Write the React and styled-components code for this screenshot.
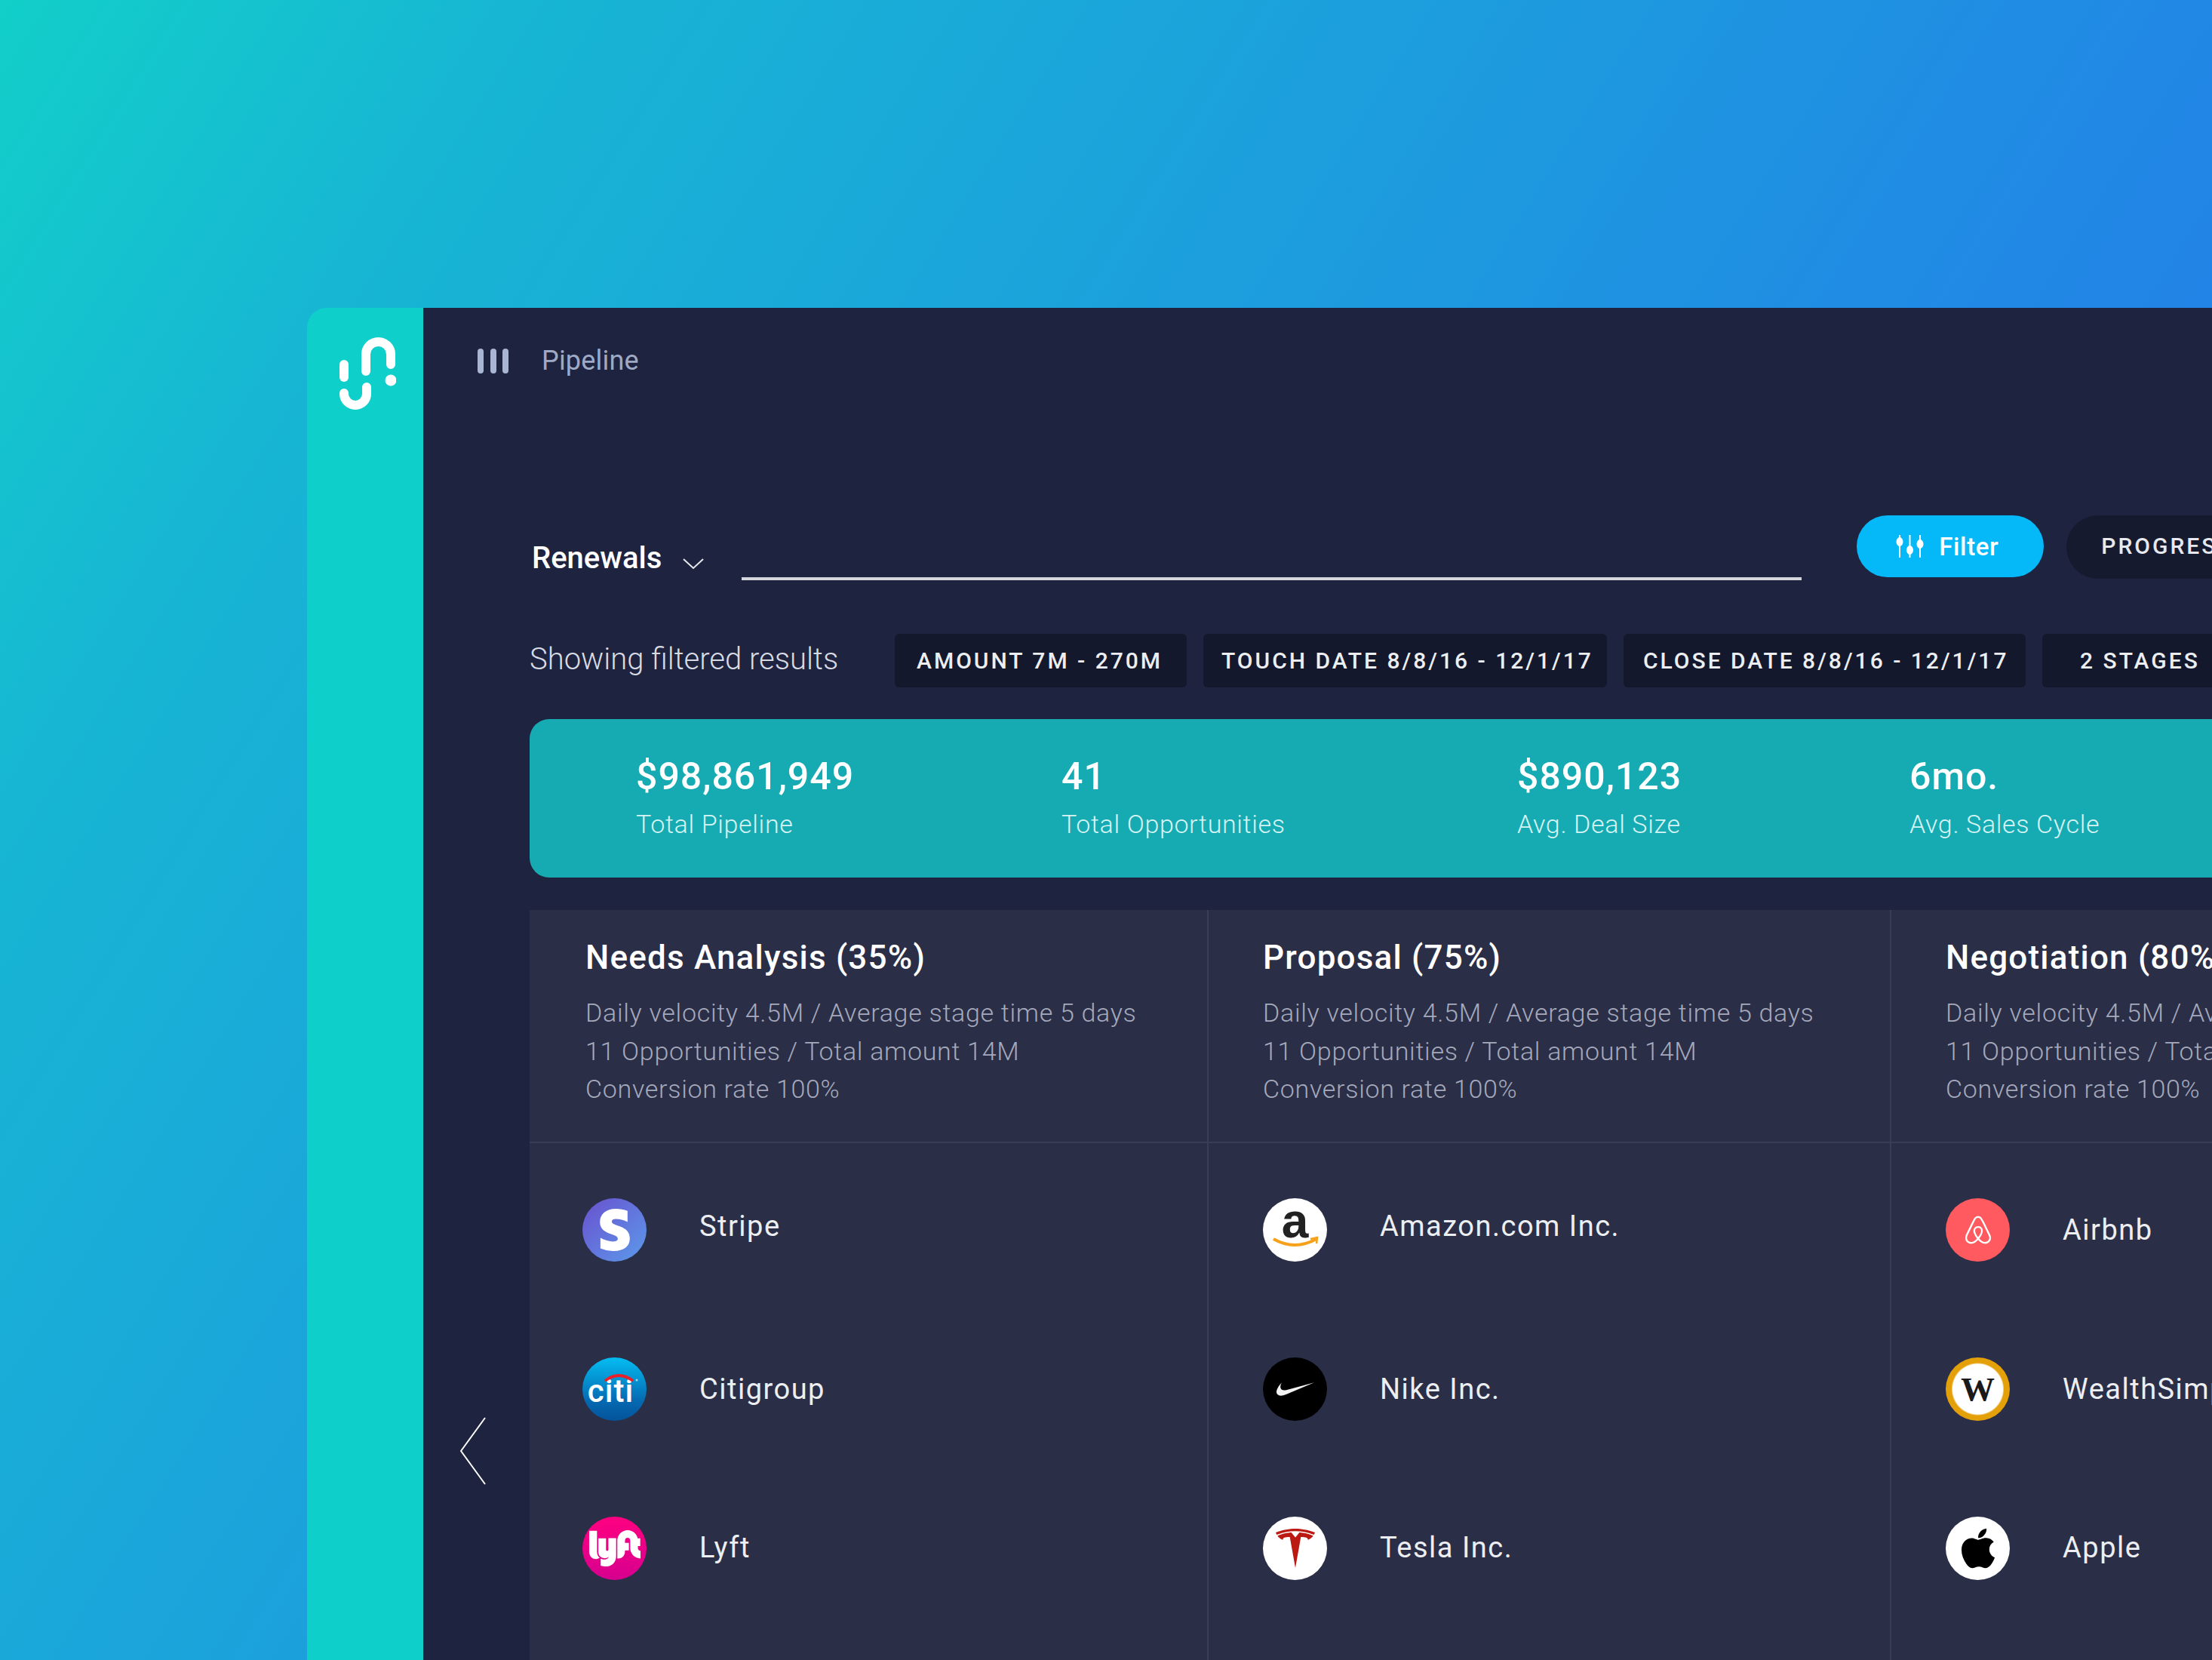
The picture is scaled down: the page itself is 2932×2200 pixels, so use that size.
import React from "react";
import styled, { createGlobalStyle } from "styled-components";
import { FaStripeS, FaLyft, FaAirbnb, FaApple } from "react-icons/fa";
import { SiNike, SiTesla } from "react-icons/si";

const GlobalStyle = createGlobalStyle`
  html, body {
    margin: 0;
    height: 2200px;
    overflow: hidden;
  }
  body {
    font-family: Roboto, "Liberation Sans", sans-serif;
  }
`;

const Page = styled.div`
  width: 2932px;
  height: 2200px;
  box-sizing: border-box;
  padding: 408px 0 0 407px;
  overflow: hidden;
  background: linear-gradient(122deg, #12cfc9 0%, #17b6d3 16%, #1aa8d9 32%, #2188e5 68%, #2570ea 100%);
`;
const Win = styled.div`
  display: flex;
  width: 2525px;
  height: 1792px;
  overflow: hidden;
  border-top-left-radius: 26px;
`;
const Sidebar = styled.aside`
  width: 154px;
  flex-shrink: 0;
  padding: 39px 0 0 42px;
  box-sizing: border-box;
  background: #0fcfcb;
`;
const Main = styled.main`
  flex: 1;
  min-width: 0;
  background: #1e2340;
  overflow: hidden;
`;
const TopBar = styled.header`
  display: flex;
  align-items: center;
  height: 33px;
  padding: 54px 0 188px 72px;
`;
const Grip = styled.div`
  display: flex;
  gap: 8.5px;
  margin-right: 44px;
`;
const GripBar = styled.span`
  width: 8px;
  height: 33px;
  border-radius: 4px;
  background: #a9b6d3;
`;
const PageName = styled.span`
  font-size: 36px;
  font-weight: 400;
  letter-spacing: 0.2px;
  color: #9ea9c6;
  line-height: 33px;
`;
const Toolbar = styled.div`
  display: flex;
  align-items: flex-start;
  height: 84px;
  margin-left: 144px;
`;
const ViewName = styled.h2`
  margin: 35px 0 0;
  font-size: 40px;
  font-weight: 500;
  line-height: 44px;
  color: #fff;
`;
const Caret = styled.svg`
  width: 28px;
  height: 15px;
  margin: 57px 50px 0 28px;
  flex-shrink: 0;
`;
const Rule = styled.div`
  width: 1405px;
  height: 4px;
  margin: 82px 73px 0 0;
  flex-shrink: 0;
  background: #d4d6dc;
`;
const FilterButton = styled.button`
  display: flex;
  align-items: center;
  gap: 20px;
  width: 248px;
  height: 82px;
  padding: 0 0 0 52px;
  flex-shrink: 0;
  border: 0;
  border-radius: 41px;
  background: #05b9f9;
  color: #fff;
  font-family: inherit;
  font-size: 33px;
  font-weight: 500;
  letter-spacing: 0.6px;
`;
const ProgressButton = styled.button`
  height: 84px;
  width: 320px;
  padding: 0 0 4px 46px;
  margin-left: 30px;
  flex-shrink: 0;
  text-align: left;
  border: 0;
  border-radius: 42px 0 0 42px;
  background: #161a2e;
  color: #e8e9ee;
  font-family: inherit;
  font-size: 30px;
  font-weight: 500;
  letter-spacing: 3px;
  white-space: nowrap;
`;
const FilterRow = styled.div`
  display: flex;
  align-items: center;
  gap: 22px;
  height: 71px;
  margin: 73px 0 42px 141px;
`;
const FilterNote = styled.span`
  width: 462px;
  flex-shrink: 0;
  margin-bottom: 4px;
  font-size: 40px;
  font-weight: 300;
  color: #d8dbe4;
`;
const Chip = styled.span`
  display: block;
  width: ${(p) => p.$width}px;
  padding-left: ${(p) => p.$pad}px;
  box-sizing: border-box;
  flex-shrink: 0;
  line-height: 71px;
  border-radius: 6px;
  background: #14182c;
  color: #eceef2;
  font-size: 30px;
  font-weight: 500;
  letter-spacing: 3px;
  white-space: nowrap;
`;
const StatBar = styled.section`
  display: flex;
  height: 210px;
  margin-left: 141px;
  padding: 46px 0 0 141px;
  box-sizing: border-box;
  border-radius: 26px 0 0 26px;
  background: #16abb2;
`;
const Stat = styled.div`
  width: ${(p) => p.$width}px;
  flex-shrink: 0;
`;
const StatValue = styled.div`
  font-size: 50px;
  font-weight: 500;
  letter-spacing: 1px;
  line-height: 60px;
  color: #fff;
`;
const StatLabel = styled.div`
  margin-top: 13px;
  font-size: 34px;
  font-weight: 300;
  letter-spacing: 0.65px;
  line-height: 40px;
  color: #d6f4f4;
`;
const BoardRow = styled.div`
  display: flex;
  margin-top: 43px;
`;
const Gutter = styled.div`
  width: 141px;
  flex-shrink: 0;
  box-sizing: border-box;
  padding: 672px 0 0 49px;
`;
const Board = styled.div`
  display: flex;
  flex: 1;
  height: 1000px;
  background: #2a2e47;
`;
const Column = styled.div`
  width: ${(p) => p.$width}px;
  box-sizing: border-box;
  flex-shrink: 0;
  border-right: 2px solid #393d56;
`;
const LastColumn = styled.div`
  flex: 1;
  min-width: 0;
`;
const ColumnHead = styled.div`
  height: 309px;
  box-sizing: border-box;
  padding: 38px 0 0 ${(p) => p.$pad}px;
  border-bottom: 2px solid #393d56;
  white-space: nowrap;
`;
const ColumnTitle = styled.h3`
  margin: 0 0 23px;
  font-size: 44px;
  font-weight: 500;
  letter-spacing: 1.2px;
  line-height: 50px;
  color: #fff;
`;
const ColumnLine = styled.div`
  font-size: 34px;
  font-weight: 300;
  letter-spacing: 0.7px;
  line-height: 50.5px;
  color: #a5a9bb;
`;
const RowList = styled.div`
  display: flex;
  flex-direction: column;
  gap: 127px;
  padding: 73px 0 0 ${(p) => p.$pad}px;
`;
const Row = styled.div`
  display: flex;
  align-items: center;
  gap: 70px;
  height: 84px;
`;
const RowName = styled.span`
  font-size: 38px;
  letter-spacing: 1.5px;
  color: #eceef2;
  white-space: nowrap;
  margin-bottom: ${(p) => p.$lift || 0}px;
`;
const Avatar = styled.div`
  position: relative;
  display: flex;
  align-items: center;
  justify-content: center;
  width: 85px;
  height: 84px;
  flex-shrink: 0;
  border-radius: 50%;
  background: ${(p) => p.$bg};
  color: ${(p) => p.$fg || "#fff"};
  overflow: hidden;
`;
const CitiWord = styled.span`
  margin: 6px 10px 0 0;
  font-size: 42px;
  font-weight: 500;
  line-height: 1;
  letter-spacing: 1px;
`;
const AmazonWord = styled.span`
  margin-top: -24px;
  font-family: "Liberation Sans", sans-serif;
  font-size: 64px;
  font-weight: 700;
  line-height: 1;
`;
const WealthWord = styled.span`
  font-family: "Liberation Serif", serif;
  font-size: 45px;
  font-weight: 700;
  line-height: 1;
  color: #1a1a1a;
`;
const Overlay = styled.svg`
  position: absolute;
  left: 0;
  top: 0;
  width: 85px;
  height: 84px;
`;

const Logo = () => (
  <svg width="76" height="96" viewBox="0 0 76 96" fill="none" stroke="#fff" strokeWidth="12" strokeLinecap="round">
    <path d="M7 36V53" />
    <path d="M7 74V75A15 15 0 0 0 37 75V66" />
    <path d="M36 45V22.5A16.5 16.5 0 0 1 69 22.5V36" />
    <circle cx="69" cy="57" r="7.5" fill="#fff" stroke="none" />
  </svg>
);

const SlidersIcon = () => (
  <svg width="37" height="30" viewBox="0 0 37 30" fill="#fff" stroke="#fff" strokeWidth="2">
    <path d="M5 0V30M18.5 0V30M32 0V30" />
    <ellipse cx="5" cy="9" rx="3.5" ry="5" />
    <ellipse cx="18.5" cy="20" rx="3.5" ry="5" />
    <ellipse cx="32" cy="12" rx="3.5" ry="5" />
  </svg>
);

const logos = {
  stripe: (
    <Avatar $bg="linear-gradient(135deg, #6a50cf, #5b9bea)">
      <FaStripeS size={56} />
    </Avatar>
  ),
  citi: (
    <Avatar $bg="linear-gradient(180deg, #04bdf2, #0568b0 70%, #04539a)">
      <CitiWord>citi</CitiWord>
      <Overlay viewBox="0 0 85 84">
        <path d="M30 31Q48 17 67 31" fill="none" stroke="#e8202a" strokeWidth="4" />
        <circle cx="72" cy="30" r="1.5" fill="#9fd8f0" />
      </Overlay>
    </Avatar>
  ),
  lyft: (
    <Avatar $bg="linear-gradient(180deg, #ff0080, #d6008f)">
      <FaLyft size={68} />
    </Avatar>
  ),
  amazon: (
    <Avatar $bg="#fff" $fg="#222">
      <AmazonWord>a</AmazonWord>
      <Overlay viewBox="0 0 85 84">
        <path d="M14 54Q42 70 71 54" fill="none" stroke="#f7a11a" strokeWidth="4" />
        <path d="M63 54L72 52L71 60" fill="none" stroke="#f7a11a" strokeWidth="2.5" />
      </Overlay>
    </Avatar>
  ),
  nike: (
    <Avatar $bg="#000" $fg="#f2f2f2">
      <SiNike size={50} />
    </Avatar>
  ),
  tesla: (
    <Avatar $bg="#fff" $fg="#bb1a12">
      <SiTesla size={52} />
    </Avatar>
  ),
  airbnb: (
    <Avatar $bg="#ff5a5f">
      <FaAirbnb size={42} />
    </Avatar>
  ),
  wealth: (
    <Avatar $bg="radial-gradient(circle, #fff 0 33px, #e4a008 35px)">
      <WealthWord>W</WealthWord>
    </Avatar>
  ),
  apple: (
    <Avatar $bg="#fff" $fg="#000">
      <FaApple size={60} />
    </Avatar>
  ),
};

const columns = [
  {
    title: "Needs Analysis (35%)",
    width: 900,
    head: 74,
    list: 70,
    rows: [
      { logo: "stripe", name: "Stripe", lift: 10 },
      { logo: "citi", name: "Citigroup" },
      { logo: "lyft", name: "Lyft", lift: 2 },
    ],
  },
  {
    title: "Proposal (75%)",
    width: 905,
    head: 72,
    list: 72,
    rows: [
      { logo: "amazon", name: "Amazon.com Inc.", lift: 10 },
      { logo: "nike", name: "Nike Inc." },
      { logo: "tesla", name: "Tesla Inc.", lift: 2 },
    ],
  },
  {
    title: "Negotiation (80%)",
    head: 72,
    list: 72,
    rows: [
      { logo: "airbnb", name: "Airbnb" },
      { logo: "wealth", name: "WealthSimple" },
      { logo: "apple", name: "Apple", lift: 2 },
    ],
  },
];

const stats = [
  { value: "$98,861,949", label: "Total Pipeline", width: 564 },
  { value: "41", label: "Total Opportunities", width: 604 },
  { value: "$890,123", label: "Avg. Deal Size", width: 520 },
  { value: "6mo.", label: "Avg. Sales Cycle", width: 300 },
];

function ColumnBody({ col }) {
  return (
    <>
      <ColumnHead $pad={col.head}>
        <ColumnTitle>{col.title}</ColumnTitle>
        <ColumnLine>Daily velocity 4.5M / Average stage time 5 days</ColumnLine>
        <ColumnLine>11 Opportunities / Total amount 14M</ColumnLine>
        <ColumnLine>Conversion rate 100%</ColumnLine>
      </ColumnHead>
      <RowList $pad={col.list}>
        {col.rows.map((row) => (
          <Row key={row.name}>
            {logos[row.logo]}
            <RowName $lift={row.lift}>{row.name}</RowName>
          </Row>
        ))}
      </RowList>
    </>
  );
}

export default function App() {
  return (
    <Page>
      <GlobalStyle />
      <Win>
        <Sidebar>
          <Logo />
        </Sidebar>
        <Main>
          <TopBar>
            <Grip>
              <GripBar />
              <GripBar />
              <GripBar />
            </Grip>
            <PageName>Pipeline</PageName>
          </TopBar>
          <Toolbar>
            <ViewName>Renewals</ViewName>
            <Caret viewBox="0 0 28 15" fill="none" stroke="#e8e9ee" strokeWidth="2">
              <path d="M1 1L14 13L27 1" />
            </Caret>
            <Rule />
            <FilterButton>
              <SlidersIcon />
              Filter
            </FilterButton>
            <ProgressButton>PROGRESS</ProgressButton>
          </Toolbar>
          <FilterRow>
            <FilterNote>Showing filtered results</FilterNote>
            <Chip $width={387} $pad={29}>AMOUNT 7M - 270M</Chip>
            <Chip $width={535} $pad={24}>TOUCH DATE 8/8/16 - 12/1/17</Chip>
            <Chip $width={533} $pad={26}>CLOSE DATE 8/8/16 - 12/1/17</Chip>
            <Chip $width={260} $pad={50}>2 STAGES</Chip>
          </FilterRow>
          <StatBar>
            {stats.map((s) => (
              <Stat key={s.label} $width={s.width}>
                <StatValue>{s.value}</StatValue>
                <StatLabel>{s.label}</StatLabel>
              </Stat>
            ))}
          </StatBar>
          <BoardRow>
            <Gutter>
              <svg width="34" height="90" viewBox="0 0 34 90" fill="none" stroke="#fff" strokeWidth="2">
                <path d="M33 1L1 45L33 89" />
              </svg>
            </Gutter>
            <Board>
              <Column $width={columns[0].width}>
                <ColumnBody col={columns[0]} />
              </Column>
              <Column $width={columns[1].width}>
                <ColumnBody col={columns[1]} />
              </Column>
              <LastColumn>
                <ColumnBody col={columns[2]} />
              </LastColumn>
            </Board>
          </BoardRow>
        </Main>
      </Win>
    </Page>
  );
}
